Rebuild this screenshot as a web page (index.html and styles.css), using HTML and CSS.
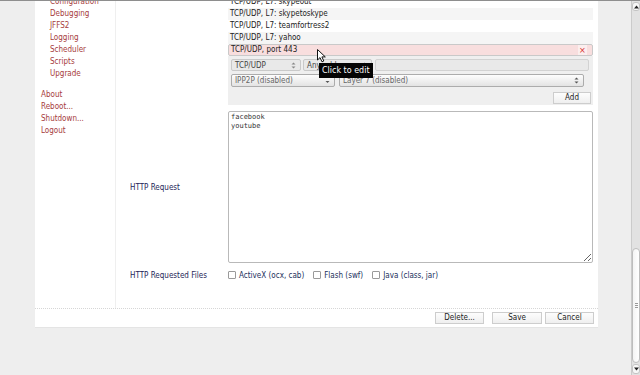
FILE: index.html
```html
<!DOCTYPE html>
<html lang="en">
<head>
<meta charset="utf-8">
<title>Access Restriction</title>
<link rel="stylesheet" href="styles.css">
</head>
<body>
<div class="viewport">
  <div class="page">
    <div class="container">
      <div class="cols">
        <nav class="sidebar">
          <ul class="sub">
            <li><a href="#">Configuration</a></li>
            <li><a href="#">Debugging</a></li>
            <li><a href="#">JFFS2</a></li>
            <li><a href="#">Logging</a></li>
            <li><a href="#">Scheduler</a></li>
            <li><a href="#">Scripts</a></li>
            <li><a href="#">Upgrade</a></li>
          </ul>
          <ul class="top">
            <li><a href="#">About</a></li>
            <li><a href="#">Reboot...</a></li>
            <li><a href="#">Shutdown...</a></li>
            <li><a href="#">Logout</a></li>
          </ul>
        </nav>
        <main class="main">
          <div class="field">
            <div class="label"></div>
            <div class="value">
              <div class="rules">
                <div class="row">TCP/UDP, L7: skypeout</div>
                <div class="row alt">TCP/UDP, L7: skypetoskype</div>
                <div class="row">TCP/UDP, L7: teamfortress2</div>
                <div class="row alt">TCP/UDP, L7: yahoo</div>
                <div class="row sel"><span>TCP/UDP, port 443</span><span class="del">×</span></div>
              </div>
              <div class="editor">
                <div class="line line-a">
                  <div class="sel flat w-proto"><span>TCP/UDP</span><svg class="ud" width="5" height="7" viewBox="0 0 5 7"><path d="M0.5 2.5 L2.5 0.5 L4.5 2.5 Z M0.5 4.5 L2.5 6.5 L4.5 4.5 Z" fill="#888"/></svg></div>
                  <div class="sel flat w-addr"><span>Any address</span><svg class="ud" width="5" height="7" viewBox="0 0 5 7"><path d="M0.5 2.5 L2.5 0.5 L4.5 2.5 Z M0.5 4.5 L2.5 6.5 L4.5 4.5 Z" fill="#888"/></svg></div>
                  <div class="inp"></div>
                </div>
                <div class="line line-b">
                  <div class="sel grad w-ipp"><span>IPP2P (disabled)</span><svg class="ud" width="5" height="7" viewBox="0 0 5 7"><path d="M0.5 4 L2.5 6 L4.5 4 Z" fill="#555"/></svg></div>
                  <div class="sel grad w-l7"><span>Layer 7 (disabled)</span><svg class="ud" width="5" height="7" viewBox="0 0 5 7"><path d="M0.5 2.5 L2.5 0.5 L4.5 2.5 Z M0.5 4.5 L2.5 6.5 L4.5 4.5 Z" fill="#555"/></svg></div>
                </div>
                <div class="line line-c">
                  <button class="btn add" type="button">Add</button>
                </div>
                <svg class="cursor" width="10" height="14" viewBox="0 0 10 14"><path d="M0.5 0.5 L0.5 11 L3 8.6 L5 12.8 L6.8 12 L4.9 7.9 L8.3 7.9 Z" fill="#fff" stroke="#111" stroke-width="1" stroke-linejoin="round"/></svg>
                <div class="tip">Click to edit</div>
              </div>
            </div>
          </div>
          <div class="field f-req">
            <div class="label">HTTP Request</div>
            <div class="value">
              <textarea class="ta" readonly>facebook
youtube</textarea>
            </div>
          </div>
          <div class="field f-files">
            <div class="label">HTTP Requested Files</div>
            <div class="value checks">
              <label class="chk"><input type="checkbox"><span>ActiveX (ocx, cab)</span></label>
              <label class="chk"><input type="checkbox"><span>Flash (swf)</span></label>
              <label class="chk"><input type="checkbox"><span>Java (class, jar)</span></label>
            </div>
          </div>
        </main>
      </div>
      <div class="footer">
        <button class="btn b-del" type="button">Delete...</button>
        <button class="btn b-save" type="button">Save</button>
        <button class="btn b-cancel" type="button">Cancel</button>
      </div>
    </div>
  </div>
  <div class="scrollbar">
    <div class="sb-btn sb-up"><svg width="5" height="4" viewBox="0 0 5 4"><path d="M0 3.5 L2.5 0.5 L5 3.5 Z" fill="#222"/></svg></div>
    <div class="sb-track"><div class="sb-thumb"><span></span><span></span><span></span></div></div>
    <div class="sb-btn sb-down"><svg width="5" height="4" viewBox="0 0 5 4"><path d="M0 0.5 L2.5 3.5 L5 0.5 Z" fill="#222"/></svg></div>
  </div>
</div>
</body>
</html>
```
FILE: styles.css
```css
* { box-sizing: border-box; margin: 0; padding: 0; }
html, body { height: 100%; }
body {
  background: #eeeeee;
  font-family: "DejaVu Sans Condensed", "DejaVu Sans", sans-serif;
  font-size: 8px;
  color: #222;
  overflow: hidden;
}
.viewport {
  display: flex;
  height: 375px;
  border-top: 1px solid #8e8e8e;
  overflow: hidden;
}
.page { flex: 1; overflow: hidden; }
.container {
  margin: -5px 0 0 35px;
  width: 563px;
  background: #fff;
  border-bottom: 1px solid #e4e4e4;
}
.cols { display: flex; }

/* sidebar */
.sidebar {
  width: 81px;
  flex: none;
  border-right: 1px solid #efefef;
  line-height: 12px;
}
.sidebar ul { list-style: none; }
.sub { padding-left: 15px; }
.top { padding-left: 6px; margin-top: 9px; }
.sidebar a { color: #a63c3c; text-decoration: none; }

/* main */
.main { flex: 1; padding-bottom: 27px; }
.field {
  display: grid;
  grid-template-columns: 112px 1fr;
  align-items: center;
  padding-right: 5px;
}
.label { padding-left: 14px; color: #1e1e58; }

.rules .row {
  height: 12px;
  line-height: 12px;
  padding-left: 2px;
  white-space: nowrap;
}
.rules .alt { background: #f5f5f5; }
.rules .sel {
  background: #f8dede;
  display: flex;
  justify-content: space-between;
}
.del {
  color: #d83030;
  background: #fbeeee;
  font-size: 9px;
  width: 9px;
  text-align: center;
  margin-right: 1px;
  line-height: 11px;
}

.editor {
  position: relative;
  background: #efefef;
  padding: 3px 2px 1px 3px;
}
.line { display: flex; }
.line-a { height: 12px; margin-bottom: 3px; }
.line-b { height: 13px; margin-bottom: 5px; }
.line-c { height: 12px; justify-content: flex-end; }

.sel {
  display: flex;
  align-items: center;
  justify-content: space-between;
  border: 1px solid #c9c9c9;
  border-radius: 2px;
  padding: 0 4px 0 3px;
  white-space: nowrap;
  overflow: hidden;
}
.sel.flat { background: #e9e9e9; color: #444; }
.sel.grad {
  background: linear-gradient(#fdfdfd, #e3e3e3);
  border-color: #acacac;
  color: #666;
}
.w-proto { width: 70px; margin-right: 2px; }
.w-addr { width: 69px; margin-right: 3px; }
.w-ipp { width: 104px; margin-right: 4px; }
.w-l7 { width: 245px; }
.ud { flex: none; }
.inp {
  flex: 1;
  margin-right: 2px;
  border: 1px solid #d2d2d2;
  border-radius: 2px;
  background: #e9e9e9;
}

.btn {
  font-family: inherit;
  font-size: 8px;
  color: #222;
  height: 12px;
  line-height: 10px;
  border: 1px solid #cdcdcd;
  background: linear-gradient(#fdfdfd, #efefef);
  border-radius: 0;
}
.add { width: 38px; }

.cursor { position: absolute; left: 89px; top: -7px; }
.tip {
  position: absolute;
  left: 91px;
  top: 7px;
  background: #050505;
  color: #fff;
  font-family: "DejaVu Sans", sans-serif;
  font-size: 8px;
  height: 15px;
  line-height: 15px;
  padding: 0 3px;
  white-space: nowrap;
}

.f-req { margin-top: 6px; }
.ta {
  display: block;
  width: 100%;
  height: 152px;
  border: 1px solid #b9b9b9;
  border-radius: 2px;
  padding: 1px 2px;
  font-family: "DejaVu Sans Mono", monospace;
  font-size: 7px;
  line-height: 9px;
  color: #333;
  resize: both;
  outline: none;
}

.f-files { margin-top: 6px; height: 12px; }
.checks { display: flex; align-items: center; }
.chk {
  display: flex;
  align-items: center;
  color: #22305c;
  margin-right: 9px;
  white-space: nowrap;
}
.chk input {
  appearance: none;
  -webkit-appearance: none;
  width: 8px;
  height: 8px;
  border: 1px solid #9a9a9a;
  border-radius: 1px;
  background: #fff;
  margin-right: 3px;
}

/* footer */
.footer {
  border-top: 1px dotted #d6d6d6;
  display: flex;
  justify-content: flex-end;
  padding: 3px 4px 3px 0;
}
.b-del { width: 49px; margin-right: 8px; }
.b-save { width: 50px; margin-right: 3px; }
.b-cancel { width: 49px; }

/* scrollbar */
.scrollbar {
  width: 9px;
  flex: none;
  background: #e2e2e2;
  border-left: 1px solid #cbcbcb;
  display: flex;
  flex-direction: column;
}
.sb-btn {
  display: flex;
  align-items: center;
  justify-content: center;
  background: #f7f7f7;
  border: 1px solid #c4c4c4;
  border-radius: 3px;
  margin: 1px 0;
}
.sb-up { height: 9px; }
.sb-down { height: 10px; }
.sb-track {
  flex: 1;
  display: flex;
  flex-direction: column;
  justify-content: flex-end;
}
.sb-thumb {
  height: 115px;
  background: linear-gradient(90deg, #f4f4f4, #ffffff);
  border: 1px solid #bdbdbd;
  border-radius: 4px;
  display: flex;
  flex-direction: column;
  align-items: center;
  justify-content: center;
  gap: 1px;
}
.sb-thumb span { width: 3px; height: 1px; background: #999; }
```
